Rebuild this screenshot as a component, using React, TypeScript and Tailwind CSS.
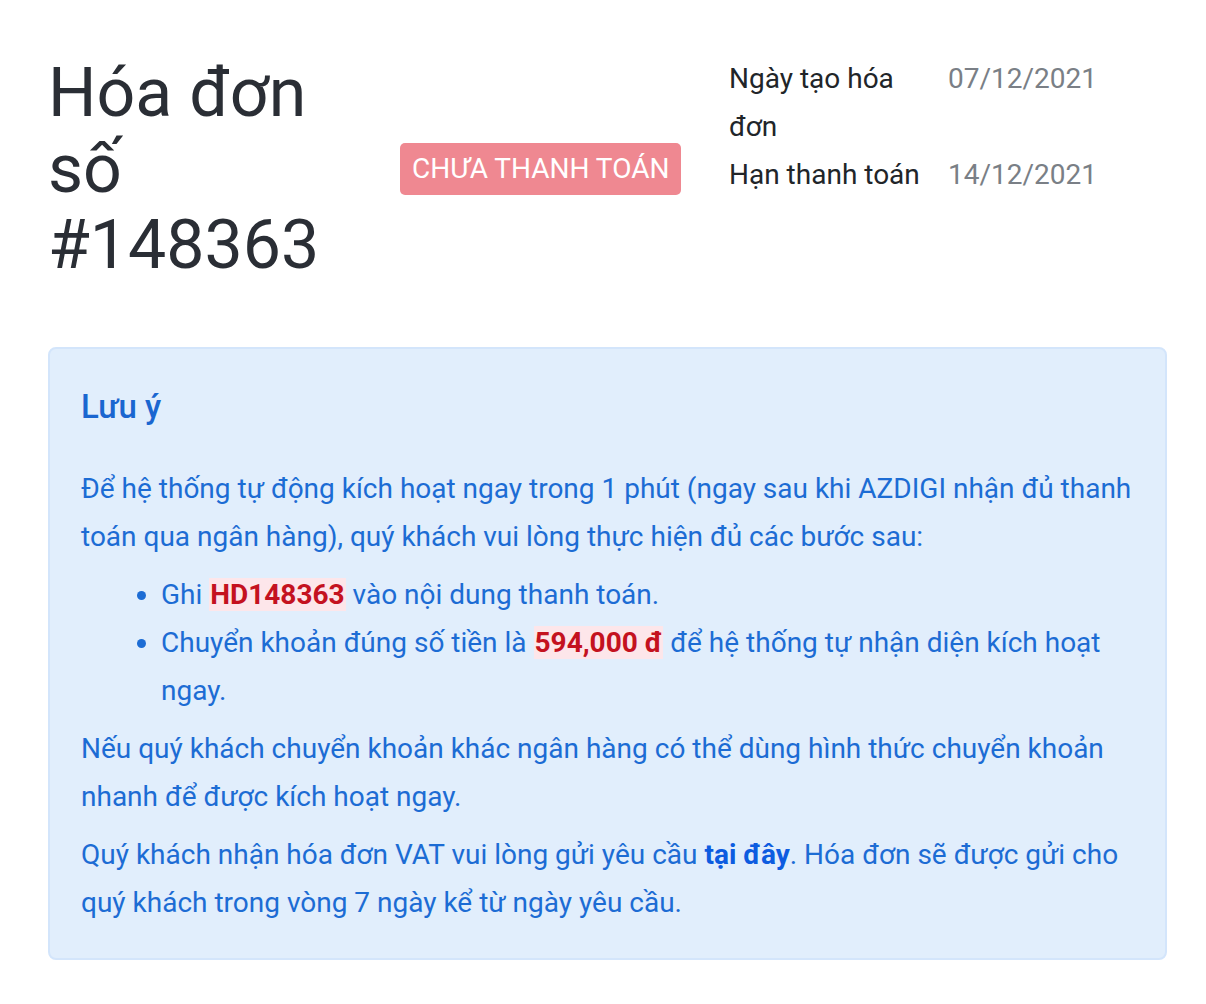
import React from 'react';

export default function App() {
  return (
    <div className="min-h-screen bg-white pl-12 pr-[39px] pt-[55px] pb-10 text-[28px] leading-[48px] text-[#212529]" style={{ fontFamily: 'Roboto, "Noto Sans", sans-serif' }}>
      {/* Header */}
      <div className="flex items-start">
        <div className="w-[352px] shrink-0">
          <h1 className="w-[300px] text-[68px] leading-[76px] font-normal text-[#2a2e35]">
            Hóa đơn số #148363
          </h1>
        </div>
        <div className="flex w-[329px] shrink-0 self-center">
          <span className="rounded-[5px] bg-[#ef8891] px-[12px] py-[2px] text-[28px] leading-[48px] text-white uppercase">
            Chưa thanh toán
          </span>
        </div>
        <div className="grid grid-cols-[219px_auto]">
          <div className="pr-4">Ngày tạo hóa đơn</div>
          <div className="text-[#7a7f86]">07/12/2021</div>
          <div className="pr-4">Hạn thanh toán</div>
          <div className="text-[#7a7f86]">14/12/2021</div>
        </div>
      </div>

      {/* Note */}
      <div className="mt-[64px] rounded-lg border-2 border-[#d3e5fb] bg-[#e1eefc] px-[31px] pt-[38px] pb-[31px] text-[#1c6cd4]">
        <h4 className="text-[33px] leading-[40px] font-medium text-[#1a66d0]">Lưu ý</h4>
        <p className="mt-[38px]">
          Để hệ thống tự động kích hoạt ngay trong 1 phút (ngay sau khi AZDIGI nhận đủ thanh toán qua ngân hàng), quý khách vui lòng thực hiện đủ các bước sau:
        </p>
        <ul className="mt-[10px] list-disc pl-[80px] marker:text-[#1c6cd4]">
          <li>
            Ghi <code className="bg-[#fde6ea] px-[1px] font-bold text-[#c4121f]" style={{ fontFamily: 'Roboto, sans-serif' }}>HD148363</code> vào nội dung thanh toán.
          </li>
          <li>
            Chuyển khoản đúng số tiền là <code className="bg-[#fde6ea] px-[1px] font-bold text-[#c4121f]" style={{ fontFamily: 'Roboto, sans-serif' }}>594,000 đ</code> để hệ thống tự nhận diện kích hoạt ngay.
          </li>
        </ul>
        <p className="mt-[10px]">
          Nếu quý khách chuyển khoản khác ngân hàng có thể dùng hình thức chuyển khoản nhanh để được kích hoạt ngay.
        </p>
        <p className="mt-[10px]">
          Quý khách nhận hóa đơn VAT vui lòng gửi yêu cầu <a href="#" className="font-bold text-[#0d5ce0]">tại đây</a>. Hóa đơn sẽ được gửi cho quý khách trong vòng 7 ngày kể từ ngày yêu cầu.
        </p>
      </div>
    </div>
  );
}
